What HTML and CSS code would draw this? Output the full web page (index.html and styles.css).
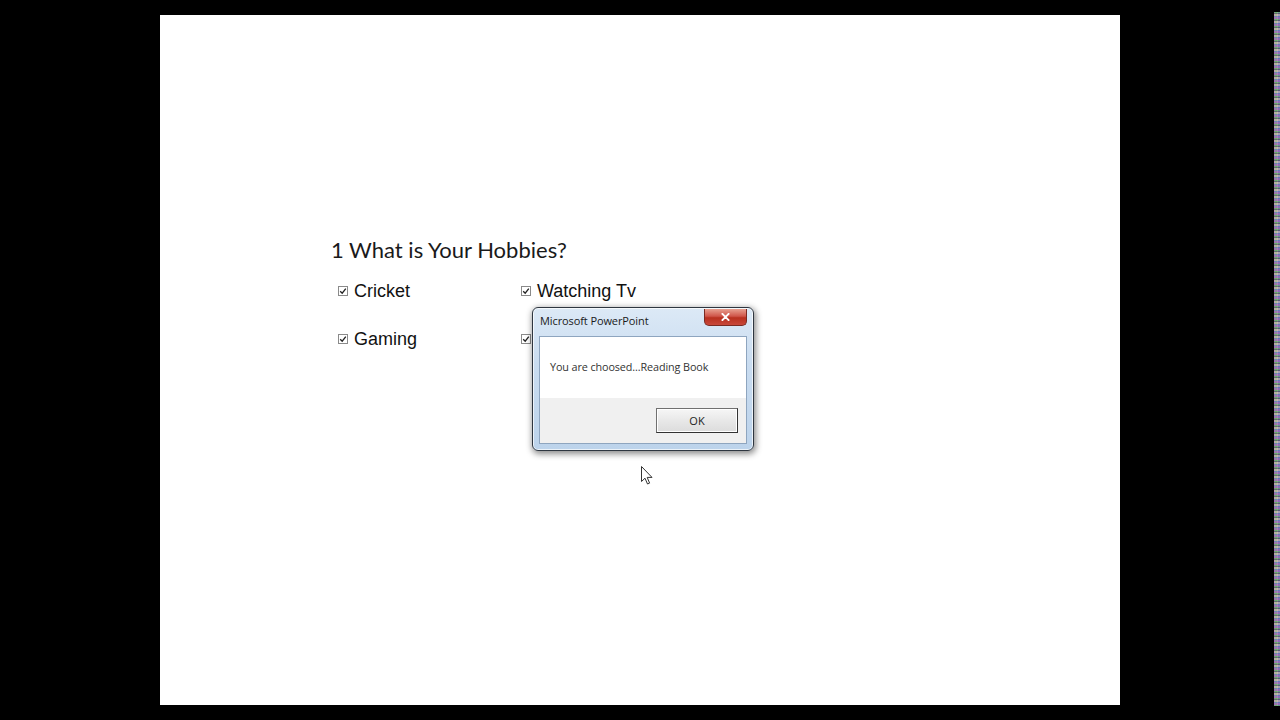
FILE: index.html
```html
<!DOCTYPE html>
<html>
<head>
<meta charset="utf-8">
<link rel="stylesheet" href="styles.css">
</head>
<body>
<div class="screen">
  <div class="slide">
    <div class="question">
      <h1 class="q-title">1 What is Your Hobbies?</h1>
      <div class="options">
        <div class="opt"><svg class="cb" viewBox="0 0 10 10"><rect x="0.5" y="0.5" width="9" height="9" fill="#fff" stroke="#8a8a8a"/><path d="M2.2 5.2 L4.2 7.2 L7.8 2.6" fill="none" stroke="#222" stroke-width="1.3"/></svg><span>Cricket</span></div>
        <div class="opt"><svg class="cb" viewBox="0 0 10 10"><rect x="0.5" y="0.5" width="9" height="9" fill="#fff" stroke="#8a8a8a"/><path d="M2.2 5.2 L4.2 7.2 L7.8 2.6" fill="none" stroke="#222" stroke-width="1.3"/></svg><span>Watching Tv</span></div>
        <div class="opt"><svg class="cb" viewBox="0 0 10 10"><rect x="0.5" y="0.5" width="9" height="9" fill="#fff" stroke="#8a8a8a"/><path d="M2.2 5.2 L4.2 7.2 L7.8 2.6" fill="none" stroke="#222" stroke-width="1.3"/></svg><span>Gaming</span></div>
        <div class="opt"><svg class="cb" viewBox="0 0 10 10"><rect x="0.5" y="0.5" width="9" height="9" fill="#fff" stroke="#8a8a8a"/><path d="M2.2 5.2 L4.2 7.2 L7.8 2.6" fill="none" stroke="#222" stroke-width="1.3"/></svg></div>
      </div>
    </div>

    <div class="dialog">
      <div class="dlg-titlebar">
        <span class="dlg-title">Microsoft PowerPoint</span>
        <div class="dlg-close"><svg viewBox="0 0 10 9" class="x-icon"><path d="M1.5 1 L8.5 8 M8.5 1 L1.5 8" stroke="#fff" stroke-width="2.2" stroke-linecap="round"/></svg></div>
      </div>
      <div class="dlg-client">
        <div class="dlg-msg">You are choosed...Reading Book</div>
        <div class="dlg-footer"><div class="dlg-btn">OK</div></div>
      </div>
    </div>

    <svg class="cursor" viewBox="0 0 12 19"><path d="M0.5 0.5 L0.5 15.5 L4 12.2 L6.5 18 L8.6 17.1 L6.2 11.4 L11 11.4 Z" fill="#fff" stroke="#333" stroke-width="1"/></svg>
  </div>
  <div class="noise"></div>
</div>
</body>
</html>
```

FILE: styles.css
```css
html, body {
  margin: 0;
  padding: 0;
  background: #000;
  width: 1280px;
  height: 720px;
  overflow: hidden;
}

.screen {
  display: flex;
  width: 1280px;
  height: 720px;
  padding-left: 160px;
  box-sizing: border-box;
}

.slide {
  position: relative;
  flex: none;
  width: 960px;
  height: 690px;
  margin-top: 15px;
  background: #fff;
  box-sizing: border-box;
  padding: 221px 0 0 171px;
}

.q-title {
  margin: 0;
  font-family: "Lato", "Open Sans", sans-serif;
  font-weight: 400;
  font-size: 22px;
  line-height: 28px;
  color: #1a1a1a;
}

.options {
  display: grid;
  grid-template-columns: 183px 183px;
  grid-auto-rows: 26px;
  row-gap: 22px;
  margin-top: 14px;
  margin-left: 7px;
}

.opt {
  display: flex;
  align-items: center;
  gap: 6px;
  font-family: "Liberation Sans", Arial, sans-serif;
  font-size: 18px;
  line-height: 26px;
  color: #111;
}

.cb {
  width: 10px;
  height: 10px;
  flex: none;
}

.dialog {
  position: absolute;
  left: 372px;
  top: 292px;
  width: 222px;
  height: 144px;
  box-sizing: border-box;
  border: 1px solid #2e3640;
  border-radius: 6px;
  background: linear-gradient(180deg, #dce9f6 0%, #c9dcf0 40%, #bcd3eb 100%);
  box-shadow: 1px 2px 6px 1px rgba(0,0,0,0.45), inset 0 0 0 1px rgba(255,255,255,0.7);
  padding: 0 6px 6px 6px;
  display: flex;
  flex-direction: column;
}

.dlg-titlebar {
  height: 28px;
  display: flex;
  align-items: flex-start;
  justify-content: space-between;
}

.dlg-title {
  font-family: "Open Sans", "Noto Sans", sans-serif;
  font-size: 11px;
  color: #1a1a1a;
  margin-top: 5px;
  margin-left: 1px;
  letter-spacing: -0.1px;
}

.dlg-close {
  width: 43px;
  height: 17px;
  margin-top: 1px;
  box-sizing: border-box;
  border: 1px solid #7a2a22;
  border-top: none;
  border-radius: 0 0 5px 5px;
  background: linear-gradient(180deg, #e8a090 0%, #d0564a 45%, #b8301f 55%, #c8483a 100%);
  display: flex;
  align-items: center;
  justify-content: center;
}

.x-icon {
  width: 9px;
  height: 8px;
}

.dlg-client {
  flex: 1;
  border: 1px solid #8ea5bf;
  background: #fff;
  display: flex;
  flex-direction: column;
}

.dlg-msg {
  height: 61px;
  box-sizing: border-box;
  padding: 22px 0 0 10px;
  font-family: "Open Sans", "Noto Sans", sans-serif;
  font-size: 10.8px;
  color: #333;
  letter-spacing: -0.1px;
}

.dlg-footer {
  flex: 1;
  background: #f0f0f0;
  display: flex;
  justify-content: flex-end;
  align-items: flex-start;
  padding: 10px 8px 0 0;
}

.dlg-btn {
  width: 82px;
  height: 25px;
  box-sizing: border-box;
  border: 1px solid #707070;
  border-right-color: #333;
  border-bottom-color: #333;
  background: linear-gradient(180deg, #f6f6f6 0%, #e8e8e8 50%, #dcdcdc 100%);
  box-shadow: inset 0 0 0 1px #fff;
  font-family: "Open Sans", "Noto Sans", sans-serif;
  font-size: 11px;
  color: #222;
  display: flex;
  align-items: center;
  justify-content: center;
}

.cursor {
  position: absolute;
  left: 481px;
  top: 451px;
  width: 12px;
  height: 19px;
}

.noise {
  flex: none;
  width: 6px;
  height: 694px;
  margin-top: 12px;
  margin-left: 154px;
  background:
    repeating-linear-gradient(0deg, rgba(90,170,90,0.55) 0 1px, rgba(170,90,190,0.55) 1px 3px, rgba(90,110,200,0.5) 3px 4px, rgba(220,190,170,0.5) 4px 6px, rgba(60,60,70,0.5) 6px 7px),
    repeating-linear-gradient(90deg, #9a7fb0 0 1px, #7fae86 1px 3px, #b0aab8 3px 4px, #6f7fb0 4px 6px);
}
```
